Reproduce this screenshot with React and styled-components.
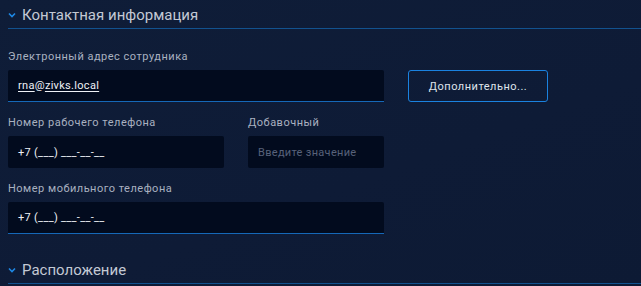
import { createGlobalStyle } from "styled-components";
import styled from "styled-components";

const GlobalStyle = createGlobalStyle`
    html, body {
        margin: 0;
        padding: 0;
        background: #0e1b36;
        font-family: Roboto, "Liberation Sans", sans-serif;
    }
`

const Page = styled.div`
    width: 641px;
    height: 286px;
    overflow: hidden;
    padding: 0 0 0 8px;
    box-sizing: border-box;
    background: linear-gradient(160deg, #0f1d38 0%, #0e1b36 60%, #0d1a34 100%);
`

const SectionHeader = styled.div`
    display: flex;
    align-items: center;
    gap: 6px;
    height: 29px;
    border-bottom: 1px solid #12528f;
    box-sizing: border-box;
    padding-top: 1px;
`

const Chevron = styled.svg`
    width: 8px;
    height: 6px;
    flex-shrink: 0;
`

const SectionTitle = styled.span`
    font-size: 15px;
    color: #c3c9d4;
`

const Body = styled.div`
    display: grid;
    grid-template-columns: 216px 136px 140px;
    column-gap: 24px;
    row-gap: 13px;
    padding-top: 20px;
    padding-bottom: 21px;
    align-items: end;
`

const Field = styled.div`
    display: flex;
    flex-direction: column;
    gap: 5px;
    grid-column: ${(p) => p.$span || "auto"};
`

const Label = styled.label`
    font-size: 11px;
    line-height: 16px;
    color: #a9b1c0;
    letter-spacing: 0.5px;
`

const Input = styled.div`
    height: 32px;
    box-sizing: border-box;
    display: flex;
    align-items: center;
    padding: 0 10px;
    background: #020b1e;
    border-radius: 2px;
    border-bottom: ${(p) => (p.$active ? "1px solid #1568b8" : "none")};
    border-bottom-left-radius: ${(p) => (p.$active ? "0" : "2px")};
    border-bottom-right-radius: ${(p) => (p.$active ? "0" : "2px")};
    font-size: 11px;
    color: ${(p) => (p.$placeholder ? "#58627a" : "#eef1f6")};
    letter-spacing: 0.3px;
    white-space: nowrap;
`

const Underlined = styled.span`
    text-decoration: underline;
    text-decoration-color: #eef1f6;
    text-underline-offset: 2px;
`

const Button = styled.button`
    height: 32px;
    box-sizing: border-box;
    background: transparent;
    border: 1px solid #1a82e0;
    border-radius: 3px;
    color: #dfe4ec;
    font-family: inherit;
    font-size: 11px;
    font-weight: 400;
    letter-spacing: 0.5px;
    cursor: pointer;
`

function ChevronIcon() {
    return (
        <Chevron viewBox="0 0 8 6">
            <path d="M1 1.5 L4 4.5 L7 1.5" fill="none" stroke="#1e88e5" strokeWidth="1.6" />
        </Chevron>
    )
}

export default function App() {
    return (
        <>
            <GlobalStyle />
            <Page>
                <SectionHeader>
                    <ChevronIcon />
                    <SectionTitle>Контактная информация</SectionTitle>
                </SectionHeader>
                <Body>
                    <Field $span="1 / 3">
                        <Label>Электронный адрес сотрудника</Label>
                        <Input $active>
                            <Underlined>rna</Underlined>@<Underlined>zivks.local</Underlined>
                        </Input>
                    </Field>
                    <Button>Дополнительно...</Button>
                    <Field>
                        <Label>Номер рабочего телефона</Label>
                        <Input>+7 (___) ___-__-__</Input>
                    </Field>
                    <Field>
                        <Label>Добавочный</Label>
                        <Input $placeholder>Введите значение</Input>
                    </Field>
                    <div />
                    <Field $span="1 / 3">
                        <Label>Номер мобильного телефона</Label>
                        <Input $active>+7 (___) ___-__-__</Input>
                    </Field>
                </Body>
                <SectionHeader>
                    <ChevronIcon />
                    <SectionTitle>Расположение</SectionTitle>
                </SectionHeader>
            </Page>
        </>
    )
}
